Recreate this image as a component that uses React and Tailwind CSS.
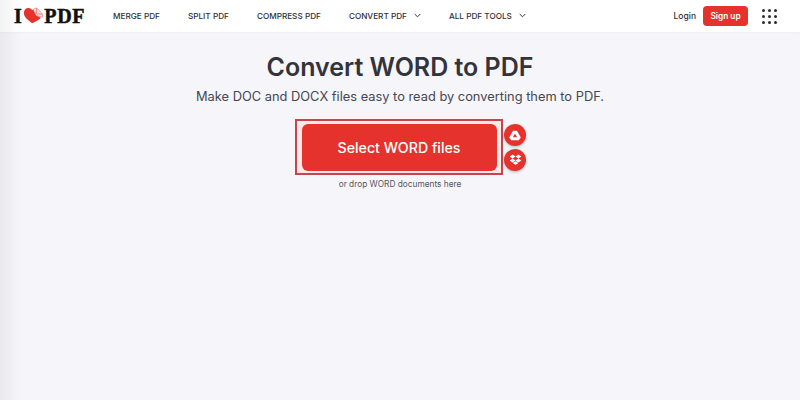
import React from 'react';

const NavItem = ({ label, chevron }) => (
  <a className="flex items-center gap-[7px] text-[8.2px] font-medium text-[#2f2f38] whitespace-nowrap">
    {label}
    {chevron && (
      <svg width="7" height="5" viewBox="0 0 7 5" fill="none" stroke="#33333b" strokeWidth="1">
        <path d="M0.7 1 L3.5 3.8 L6.3 1" />
      </svg>
    )}
  </a>
);

const Logo = () => (
  <div className="flex items-center w-[71px] font-['Liberation_Serif',serif] text-[20px] leading-none font-bold text-[#111] tracking-[0.6px] [-webkit-text-stroke:0.5px_#111]">
    <span>I</span>
    <svg width="24" height="19" viewBox="0 0 24 19" className="ml-[1px] -mt-[1px]">
      <path d="M10.5 18.5 C7 15 1 12 1 6.5 C1 3 3.4 0.8 6 0.8 C8 0.8 9.6 1.8 10.5 3.2 L13 2 L15 9.5 L20.5 12 C18 15 13.5 16.5 10.5 18.5Z" fill="#e5322d" />
      <path d="M11.5 3 C12.5 1.6 14 1 16 1 L22.5 8 L22 11.5 L15 9.5 Z" fill="#f6dfe0" stroke="#e5322d" strokeWidth="0.5" />
      <path d="M15.5 1.5 L15.5 7.5 L22 8" fill="none" stroke="#e5322d" strokeWidth="0.6" />
    </svg>
    <span>PDF</span>
  </div>
);

const AppsGrid = () => (
  <div className="grid grid-cols-3 gap-[3px]">
    {[0, 1, 2, 3, 4, 5, 6, 7, 8].map((i) => (
      <span key={i} className="w-[3px] h-[3px] rounded-full bg-[#2b2b33]" />
    ))}
  </div>
);

const CloudButton = ({ children }) => (
  <button className="w-[22px] h-[22px] rounded-full bg-[#e5322d] flex items-center justify-center shadow-[0_1px_3px_rgba(0,0,0,0.25)]">
    {children}
  </button>
);

export default function App() {
  return (
    <div className="relative w-[800px] h-[400px] overflow-hidden bg-[#f5f5fa] font-['Inter',sans-serif]">
      {/* header */}
      <header className="h-[32px] bg-white flex items-center pl-[14px] pr-[23px] shadow-[0_0_3px_rgba(0,0,0,0.06)]">
        <Logo />
        <nav className="flex items-center gap-[28px] ml-[28px]">
          <NavItem label="MERGE PDF" />
          <NavItem label="SPLIT PDF" />
          <NavItem label="COMPRESS PDF" />
          <NavItem label="CONVERT PDF" chevron />
          <NavItem label="ALL PDF TOOLS" chevron />
        </nav>
        <div className="ml-auto flex items-center">
          <span className="text-[8.5px] font-medium text-[#2f2f38]">Login</span>
          <button className="ml-[7px] w-[45px] h-[20px] rounded-[4px] bg-[#e5322d] text-white text-[8.3px] font-semibold">
            Sign up
          </button>
          <div className="ml-[14px]">
            <AppsGrid />
          </div>
        </div>
      </header>

      {/* main */}
      <main className="flex flex-col items-center">
        <h1 className="mt-[18px] text-[25px] leading-[34px] font-semibold text-[#33333b]">Convert WORD to PDF</h1>
        <p className="mt-[3px] text-[12.85px] leading-[20px] text-[#47474f]">
          Make DOC and DOCX files easy to read by converting them to PDF.
        </p>
        <div className="relative mt-[12px] -ml-[2px]">
          <div className="w-[208px] h-[56px] border-[2px] border-[#c7444d] bg-[#fbe9e9] flex items-center justify-center">
            <button className="w-[195px] h-[47px] pt-[1px] rounded-[6px] bg-[#e5322d] text-white text-[14.2px] font-medium">
              Select WORD files
            </button>
          </div>
          <div className="absolute left-[209px] top-[5px] flex flex-col gap-[3px]">
            <CloudButton>
              <svg width="12" height="11" viewBox="0 0 12 11" fill="#fff">
                <path fillRule="evenodd" d="M4 0.8 H8 L11.8 7.4 L9.8 10.2 H2.2 L0.2 7.4 Z M6 3.4 L3.9 7.2 H8.1 Z" />
              </svg>
            </CloudButton>
            <CloudButton>
              <svg width="13" height="12" viewBox="0 0 13 12" fill="#fff">
                <path d="M3.6 0.6 L6.5 2.5 L3.6 4.4 L0.7 2.5 Z M9.4 0.6 L12.3 2.5 L9.4 4.4 L6.5 2.5 Z M3.6 4.6 L6.5 6.5 L3.6 8.4 L0.7 6.5 Z M9.4 4.6 L12.3 6.5 L9.4 8.4 L6.5 6.5 Z M3.7 9 L6.5 7.2 L9.3 9 L6.5 11 Z" />
              </svg>
            </CloudButton>
          </div>
        </div>
        <p className="mt-[3px] text-[8.3px] leading-[12px] text-[#55555d]">or drop WORD documents here</p>
      </main>

      {/* soft shade on the left edge */}
      <div className="absolute inset-y-0 left-0 w-[22px] pointer-events-none bg-gradient-to-r from-black/5 to-transparent" />
    </div>
  );
}
